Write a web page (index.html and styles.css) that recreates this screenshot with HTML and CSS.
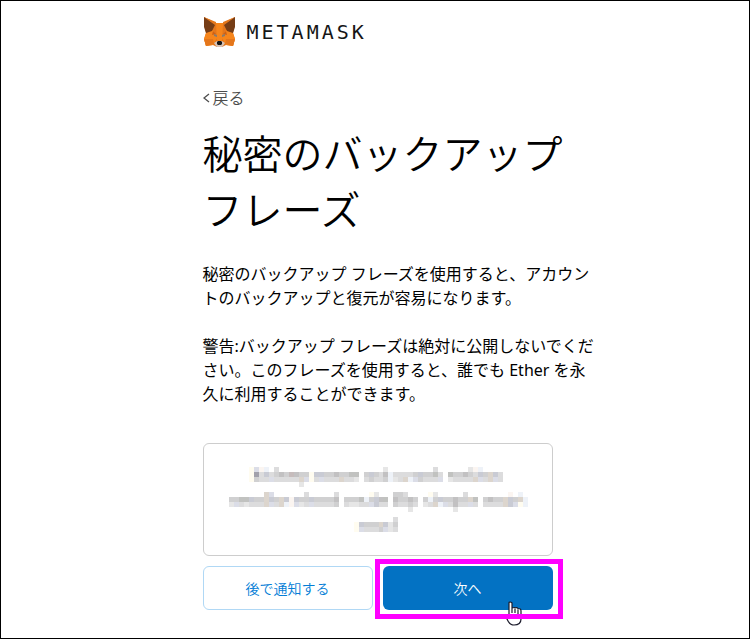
FILE: index.html
```html
<!DOCTYPE html>
<html lang="ja">
<head>
<meta charset="utf-8">
<meta name="viewport" content="width=device-width, initial-scale=1">
<title>MetaMask</title>
<link rel="stylesheet" href="styles.css">
</head>
<body>
<div class="page">
  <header class="brand">
    <svg class="fox" viewBox="0 0 33 32" aria-hidden="true">
      <path fill="#e4761b" d="M1 1 13 7h7L32 1l-1 11-1 5 2 6-2 7-7-1-4 2h-5l-4-2-7 1-2-7 2-6-1-5z"/>
      <path fill="#f6851b" d="M3 17 10 14l4 8-4 7-7 1-2-7zM30 17l-7-3-4 8 4 7 7 1 2-7zM13 7h7l-1 19h-5z"/>
      <path fill="#763d16" d="M1 1 12 9l-3 6-6 2-2-6zM32 1 21 9l3 6 6 2 2-6z"/>
      <path fill="#e2761b" d="M1 1 13 6v3zM32 1 20 6v3z"/>
      <path fill="#e4761b" d="M1 23h9l1 5-8 2zM32 23h-9l-1 5 8 2z"/>
      <path fill="#cd6116" d="m10 15 3 3-4 1zM23 15l-3 3 4 1z"/>
      <path fill="#8a7a6c" d="m11 18 3 1v2l-3-1zM22 18l-3 1v2l3-1z"/>
      <path fill="#d7c1b3" d="m11 27 3-2h5l3 2-2 3-1 1h-5l-1-1z"/>
      <path fill="#161616" d="m14 26 1-1h3l1 1v2l-1 1h-3l-1-1z"/>
    </svg>
    <span class="wordmark">METAMASK</span>
  </header>
  <main>
    <a class="back" href="#"><svg class="chevron" viewBox="0 0 7 10" aria-hidden="true"><path d="M6 1 1 5l5 4"/></svg>戻る</a>
    <h1>秘密のバックアップ フレーズ</h1>
    <p>秘密のバックアップ フレーズを使用すると、アカウントのバックアップと復元が容易になります。</p>
    <p>警告:バックアップ フレーズは絶対に公開しないでください。このフレーズを使用すると、誰でも Ether を永久に利用することができます。</p>
    <div class="phrase">
      <svg class="mosaic" viewBox="0 0 60 13" shape-rendering="crispEdges" aria-hidden="true"></svg>
    </div>
    <div class="actions">
      <button class="later" type="button">後で通知する</button>
      <div class="next-wrap">
        <button class="next" type="button">次へ</button>
        <svg class="pointer" viewBox="0 0 17 25" aria-hidden="true">
          <path d="M4 15V2q0-1 1-1t2 1v5q3-1 3 0 3-1 3 1 3-1 3 2v8q0 6-7 6-4 0-6-4l-2-4q0-2 3 0M7 7v5M10 8v4M13 9v4"/>
        </svg>
        <span class="highlight"></span>
      </div>
    </div>
  </main>
</div>
<script src="mosaic.js"></script>
</body>
</html>
```
FILE: styles.css
```css
* { box-sizing: border-box; }
body {
  margin: 0;
  background: #fff;
  color: #000;
  font: 400 16px/24px "Noto Sans", "Noto Sans CJK JP", sans-serif;
}
.page {
  min-height: 100vh;
  border: 1px solid #000;
  padding: 14px 16px 28px calc(27% - 1px);
}
.brand { display: flex; align-items: center; gap: 11px; height: 34px; }
.fox { width: 33px; height: 32px; }
.wordmark {
  font: 400 20px/32px "DejaVu Sans Mono", monospace;
  letter-spacing: 3px;
  color: #161616;
}
main { max-width: 394px; }
.back {
  display: flex;
  align-items: center;
  gap: 3px;
  width: max-content;
  margin-top: 37px;
  color: #4d4d4d;
  font-weight: 350;
  text-decoration: none;
}
.chevron { width: 7px; height: 10px; fill: none; stroke: #4d4d4d; stroke-width: 1.3; }
h1 { margin: 16px 0 24px; font-size: 40px; line-height: 56px; font-weight: 350; }
p { margin: 0 0 24px; }
.phrase {
  max-width: 350px;
  margin-top: 37px;
  padding: 23px 24px 23px 25px;
  border: 1px solid #cdcdcd;
  border-radius: 6px;
}
.mosaic { display: block; width: 100%; }
.actions {
  display: grid;
  grid-template-columns: 1fr 1fr;
  gap: 10px;
  max-width: 350px;
  margin-top: 10px;
}
.later, .next {
  width: 100%;
  height: 44px;
  padding: 0;
  border-radius: 6px;
  font: 350 14px/20px "Noto Sans CJK JP", sans-serif;
}
.later { border: 1px solid #b0d8f5; background: #fff; color: #037dd6; }
.next-wrap { position: relative; }
.next { display: block; border: 0; background: #0372c3; color: #fff; }
.pointer {
  position: absolute;
  right: 31px;
  bottom: -16px;
  width: 17px;
  height: 25px;
  fill: #fff;
  stroke: #1b1b2b;
  stroke-width: 1.2;
}
.highlight {
  position: absolute;
  inset: -7px -10px -9px -8px;
  border: 5px solid #f0f;
  pointer-events: none;
}
```
FILE: mosaic.js
```js
// Each character is one cell of the obscured phrase; a dot is an empty cell.
const shades = {
  a: "#e6e6e6", b: "#dcdcdd", c: "#d0d0d1", d: "#c2c1c2", e: "#a2a1ab",
  r: "#c6bcbc", t: "#c1c2c0", u: "#c9cbd4", s: "#dbdde7", w: "#eef2f8",
  p: "#dcd5cd", q: "#fbf5f1", y: "#fffcf0"
};
const rows = [
  "....ysqw.b.....................a.........b......aqw.........",
  "....yebubcdcrdccyuuccdcctt.cucbdwbbbbcucctb.tccdcbucpub.....",
  "....ycbbsbbbbbpsybsbbbpbba.bcbbcwabpwscbbbs.abbbbpsbpsb.....",
  "..............a.............................................",
  "",
  ".......ps......b.....b......ya...ccb....ya.....b........q.w.",
  "ccttuccpucpuquccuccccd.ccctwcudt.dccdc.cwcuccdccpt.cdccpucpw",
  "asbabbbpsbpwqsabsbbbbc.baabbsubb.cbbcb.abpwsbdbbsb.bbbbpusyw",
  "....................................a........a..............",
  "",
  ".................................b..........................",
  ".........................yucccpuac..........................",
  ".........................ysbbbcsab.........................."
];
const svg = document.querySelector(".mosaic");
rows.forEach((row, y) => [...row].forEach((shade, x) => {
  if (!shades[shade]) return;
  const cell = document.createElementNS("http://www.w3.org/2000/svg", "rect");
  cell.setAttribute("x", x);
  cell.setAttribute("y", y);
  cell.setAttribute("width", 1);
  cell.setAttribute("height", 1);
  cell.setAttribute("fill", shades[shade]);
  svg.append(cell);
}));
```
